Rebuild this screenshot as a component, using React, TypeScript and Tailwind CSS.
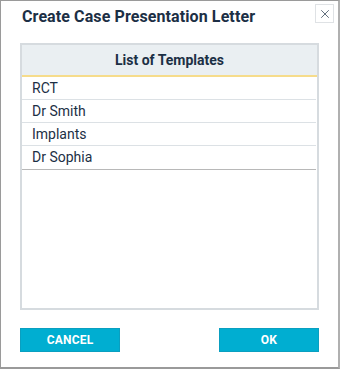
import { X } from 'lucide-react'

const templates = ['RCT', 'Dr Smith', 'Implants', 'Dr Sophia']

export default function App() {
  return (
    <div className="w-[340px] h-[369px] bg-white border border-[#9a9a9a] border-b-2 border-r-2 border-r-[#b0b0b0] flex flex-col font-['Roboto',sans-serif] text-[#1c2f45]">
      {/* Title bar */}
      <div className="relative flex items-center h-[40px] px-[21px] pb-[9px]">
        <h1 className="text-[16px] font-bold leading-none tracking-[0.1px]">Create Case Presentation Letter</h1>
        <button className="absolute top-[3px] right-[4px] w-[19px] h-[19px] border border-[#dfe2e5] flex items-center justify-center text-[#3f4f60]">
          <X size={14} strokeWidth={1.4} />
        </button>
      </div>

      {/* Template list */}
      <div className="mx-[19px] mt-[2px] h-[267px] border-2 border-[#d6dbdf] flex flex-col">
        <div className="h-[32px] bg-[#eaeff2] border-b-2 border-[#f6dc8b] flex items-center justify-center text-[14px] font-bold">
          List of Templates
        </div>
        <div className="flex flex-col border-b border-[#b8b8b8] mr-[1px]">
          {templates.map((t, i) => (
            <div
              key={t}
              className={`h-[23px] flex items-center pl-[10px] text-[14px] ${i < templates.length - 1 ? 'border-b border-[#dce1e5]' : ''}`}
            >
              {t}
            </div>
          ))}
        </div>
      </div>

      {/* Footer buttons */}
      <div className="flex justify-between mx-[19px] mt-[18px]">
        <button className="w-[100px] h-[24px] bg-[#00aed1] border border-[#0a9fc0] text-white text-[12px] font-bold tracking-[0.2px]">CANCEL</button>
        <button className="w-[100px] h-[24px] bg-[#00aed1] border border-[#0a9fc0] text-white text-[12px] font-bold tracking-[0.2px]">OK</button>
      </div>
    </div>
  )
}
